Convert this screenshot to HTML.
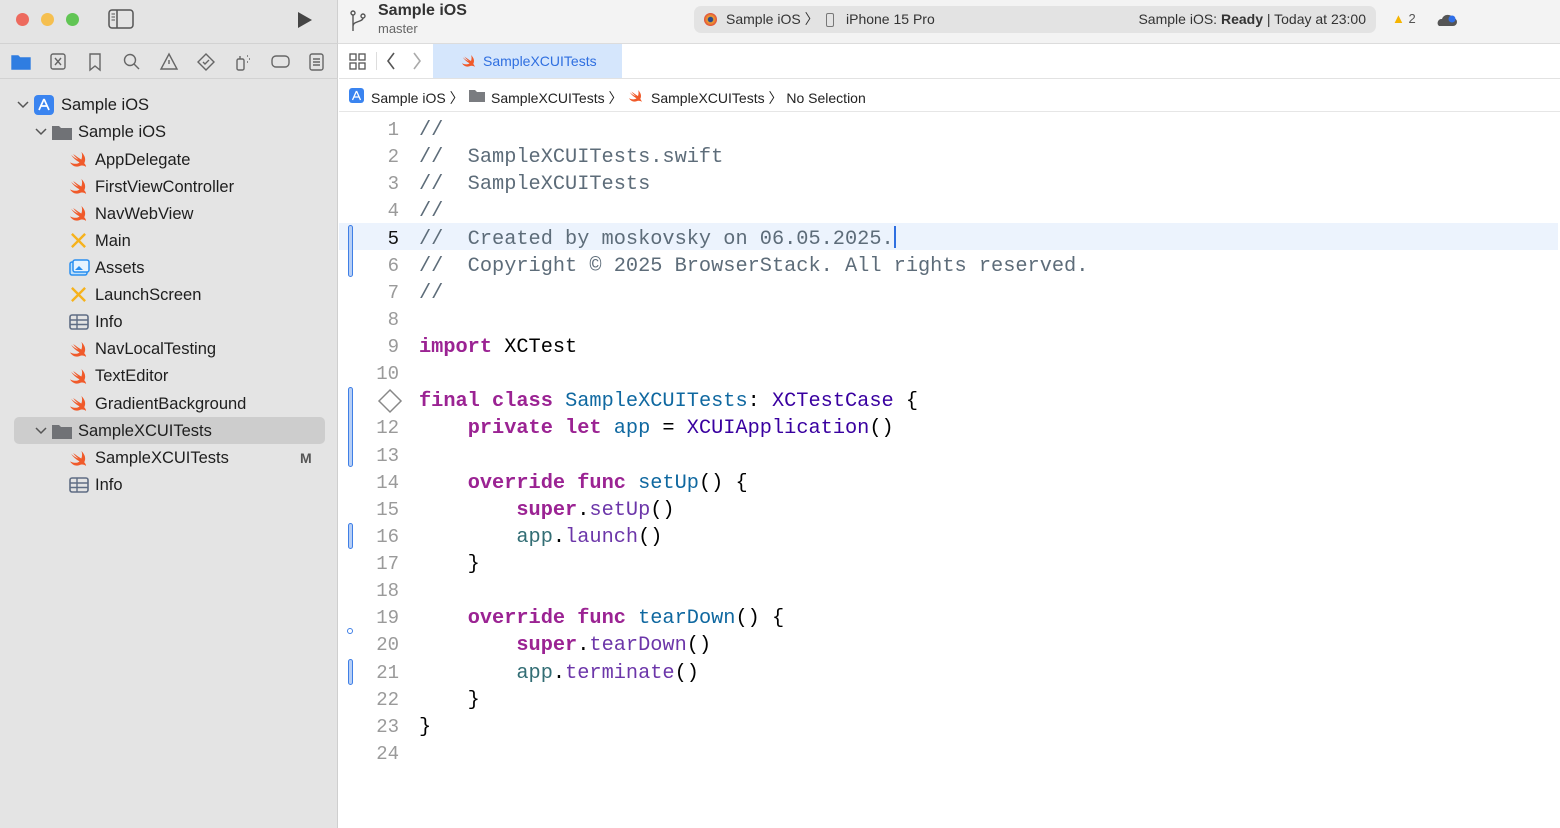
<!DOCTYPE html>
<html><head><meta charset="utf-8"><style>
*{margin:0;padding:0;box-sizing:border-box}
html,body{width:1560px;height:828px;overflow:hidden}
body{background:#fff;font-family:"Liberation Sans",sans-serif;position:relative}
.side{position:absolute;left:0;top:0;width:338px;height:828px;background:#e4e4e4;border-right:1px solid #cfcfcf}
.topbar{position:absolute;left:338px;top:0;right:0;height:44px;background:#f3f3f3;border-bottom:1px solid #dcdcdc}
.tabbar{position:absolute;left:339px;top:44px;right:0;height:35px;background:#fff;border-bottom:1px solid #e2e2e2}
.crumb{position:absolute;left:339px;top:79px;right:0;height:33px;background:#fff;border-bottom:1px solid #e6e6e6;font-size:14px;color:#222}
.dot{position:absolute;top:13px;width:13px;height:13px;border-radius:50%}
.row{position:absolute;left:0;height:27px;font-size:16.5px;color:#1e1e1e;line-height:27px;white-space:nowrap}
.code{position:absolute;left:339px;top:117px;right:0;height:700px;font-family:"Liberation Mono",monospace;font-size:20.3px;line-height:27.13px}
.ln{position:absolute;width:60px;text-align:right;color:#9a9a9a;font-size:19px;left:0}
.tx{position:absolute;left:80px;white-space:pre}
.c{color:#5d6c79}.k{color:#9b2393;font-weight:bold}.d{color:#0f68a0}.t{color:#3900a0}.u{color:#326d74}.m{color:#6c36a9}
.bar{position:absolute;left:348px;width:5px;border:1.5px solid #3f7fe6;background:#b7cff6;border-radius:3px}
.ic{position:absolute}
</style></head><body>
<div class="side">
  <div class="dot" style="left:16px;background:#ed6a5e"></div>
  <div class="dot" style="left:41px;background:#f5bf4f"></div>
  <div class="dot" style="left:66px;background:#61c554"></div>
  <svg class="ic" style="left:108px;top:9px" width="26" height="20"><rect x="1" y="1" width="24" height="18" rx="3" fill="none" stroke="#555" stroke-width="1.5"/><line x1="9" y1="1" x2="9" y2="19" stroke="#555" stroke-width="1.5"/><line x1="3.5" y1="5" x2="7" y2="5" stroke="#555"/><line x1="3.5" y1="8" x2="7" y2="8" stroke="#555"/><line x1="3.5" y1="11" x2="7" y2="11" stroke="#555"/></svg>
  <svg class="ic" style="left:296px;top:11px" width="18" height="18"><path d="M2 1 L16 9 L2 17Z" fill="#444"/></svg>
  <div style="position:absolute;left:0;top:43px;width:338px;border-top:1px solid #d2d2d2"></div>
  <div style="position:absolute;left:0;top:78px;width:338px;border-top:1px solid #d2d2d2"></div>
  <svg class="ic" style="left:11px;top:52px" width="320" height="20" fill="none" stroke="#666" stroke-width="1.4">
    <path d="M1 4 h6 l2 2 h10 v11 h-18z" fill="#2f7de1" stroke="#2f7de1"/>
    <rect x="40" y="2" width="14" height="15" rx="2"/><path d="M44 6 l6 7 M50 6 l-6 7"/>
    <path d="M79 2 h10 v16 l-5 -4 l-5 4z"/>
    <circle cx="119" cy="8" r="5.5"/><path d="M123 12 l5 5"/>
    <path d="M158 2 l8 15 h-16z"/><path d="M158 8 v4"/>
    <path d="M195 2 l8 8 l-8 8 l-8 -8z"/><path d="M192 10 l2 2 l4 -4"/>
    <rect x="226" y="7" width="7" height="11" rx="1.5"/><path d="M229 7 v-3 M236 4 l1 0 M238 7 l1 0 M236 10 l1 0"/>
    <rect x="261" y="4" width="17" height="11" rx="4"/>
    <rect x="299" y="2" width="13" height="16" rx="2"/><path d="M302 7 h7 M302 10 h7 M302 13 h7"/>
  </svg>
  <svg class="ic" style="left:17px;top:100px" width="12" height="10"><path d="M1 2 l5 5 l5 -5" stroke="#555" fill="none" stroke-width="1.5"/></svg>
  <svg class="ic" style="left:34px;top:95px" width="20" height="20"><rect x="0" y="0" width="20" height="20" rx="4" fill="#3a84f0"/><path d="M10 4 l-5 11 M10 4 l5 11 M6.5 11 h7" stroke="#fff" stroke-width="1.7" fill="none"/></svg>
  <div class="row" style="top:92px;left:61px">Sample iOS</div>
  <svg class="ic" style="left:35px;top:127px" width="12" height="10"><path d="M1 2 l5 5 l5 -5" stroke="#555" fill="none" stroke-width="1.5"/></svg>
  <svg class="ic" style="left:52px;top:124px" width="20" height="16"><path d="M0 2 h7 l2 2 h11 v12 h-20z" fill="#707276"/></svg>
  <div class="row" style="top:119px;left:78px">Sample iOS</div>
  <div style="position:absolute;left:14px;top:417px;width:311px;height:27px;background:#cdcdcd;border-radius:5px"></div>
  <svg class="ic" style="left:35px;top:426px" width="12" height="10"><path d="M1 2 l5 5 l5 -5" stroke="#555" fill="none" stroke-width="1.5"/></svg>
  <svg class="ic" style="left:52px;top:423px" width="20" height="16"><path d="M0 2 h7 l2 2 h11 v12 h-20z" fill="#707276"/></svg>
  <div class="row" style="top:418px;left:78px">SampleXCUITests</div>
  <div class="row" style="top:445px;left:300px;font-weight:bold;color:#555;font-size:14px">M</div>
  <svg width="0" height="0" style="position:absolute"><defs>
   <symbol id="sw" viewBox="0 0 20 18"><path d="M12 1 C16 5 17 9 15 13 C17 15 17 17 17 17 C15 15 12 15 10 16 C5 18 1 14 0 12 C4 14 8 14 10 12 C6 10 3 7 1 4 C4 7 8 9 9 9 C6 7 4 4 3 3 C6 5 10 8 12 9 C13 6 13 3 12 1Z" fill="#f05a2a"/></symbol>
   <symbol id="xb" viewBox="0 0 18 18"><path d="M2 2 L16 16 M16 2 L2 16" stroke="#f6b21c" stroke-width="2.5"/></symbol>
   <symbol id="tb" viewBox="0 0 20 16"><rect x="1" y="1" width="18" height="14" rx="2" fill="none" stroke="#5f6d84" stroke-width="1.6"/><path d="M1 6 h18 M1 10.5 h18 M8 1 v14" stroke="#5f6d84" stroke-width="1.4"/></symbol>
  </defs></svg>
  <svg class="ic" style="left:70px;top:151px" width="19" height="17"><use href="#sw"/></svg><div class="row" style="top:147px;left:95px">AppDelegate</div>
  <svg class="ic" style="left:70px;top:178px" width="19" height="17"><use href="#sw"/></svg><div class="row" style="top:174px;left:95px">FirstViewController</div>
  <svg class="ic" style="left:70px;top:205px" width="19" height="17"><use href="#sw"/></svg><div class="row" style="top:201px;left:95px">NavWebView</div>
  <svg class="ic" style="left:70px;top:232px" width="17" height="17"><use href="#xb"/></svg><div class="row" style="top:228px;left:95px">Main</div>
  <svg class="ic" style="left:69px;top:259px" width="21" height="17"><rect x="1" y="3" width="17" height="13" rx="2" fill="#bfe0fb" stroke="#2a8ff0" stroke-width="1.5"/><rect x="4" y="1" width="16" height="12" rx="2" fill="#e6f3ff" stroke="#2a8ff0" stroke-width="1.5"/><path d="M6 11 l4 -4 l4 4z" fill="#2a8ff0"/></svg><div class="row" style="top:255px;left:95px">Assets</div>
  <svg class="ic" style="left:70px;top:286px" width="17" height="17"><use href="#xb"/></svg><div class="row" style="top:282px;left:95px">LaunchScreen</div>
  <svg class="ic" style="left:69px;top:314px" width="20" height="16"><use href="#tb"/></svg><div class="row" style="top:309px;left:95px">Info</div>
  <svg class="ic" style="left:70px;top:341px" width="19" height="17"><use href="#sw"/></svg><div class="row" style="top:336px;left:95px">NavLocalTesting</div>
  <svg class="ic" style="left:70px;top:368px" width="19" height="17"><use href="#sw"/></svg><div class="row" style="top:363px;left:95px">TextEditor</div>
  <svg class="ic" style="left:70px;top:395px" width="19" height="17"><use href="#sw"/></svg><div class="row" style="top:391px;left:95px">GradientBackground</div>
  <svg class="ic" style="left:70px;top:450px" width="19" height="17"><use href="#sw"/></svg><div class="row" style="top:445px;left:95px">SampleXCUITests</div>
  <svg class="ic" style="left:69px;top:477px" width="20" height="16"><use href="#tb"/></svg><div class="row" style="top:472px;left:95px">Info</div>
</div>

<div class="topbar">
  <svg class="ic" style="left:12px;top:10px" width="16" height="22"><circle cx="3" cy="3" r="2" fill="none" stroke="#555" stroke-width="1.4"/><circle cx="13" cy="6" r="2" fill="none" stroke="#555" stroke-width="1.4"/><path d="M3 5 v16 M3 16 C3 11 13 12 13 8" stroke="#555" fill="none" stroke-width="1.4"/></svg>
  <div style="position:absolute;left:40px;top:2px;font-size:16px;font-weight:bold;color:#333">Sample iOS</div>
  <div style="position:absolute;left:40px;top:21px;font-size:13px;color:#666">master</div>
  <div style="position:absolute;left:356px;top:6px;width:682px;height:27px;background:#e3e3e3;border-radius:7px;font-size:14px;color:#333;line-height:27px">
    <span style="position:absolute;left:10px;top:7px;width:13px;height:13px;border-radius:50%;background:radial-gradient(circle,#2a4a8a 25%,#f0a030 35%,#e04d3a 70%)"></span>
    <span style="position:absolute;left:32px">Sample iOS 〉</span>
    <span style="position:absolute;left:132px;top:7px;width:8px;height:14px;border:1.3px solid #777;border-radius:2px"></span>
    <span style="position:absolute;left:152px">iPhone 15 Pro</span>
    <span style="position:absolute;right:10px">Sample iOS: <b>Ready</b> | Today at 23:00</span>
  </div>
  <div style="position:absolute;left:1054px;top:11px;font-size:13px;color:#555"><span style="color:#f5b400">▲</span> 2</div>
  <svg class="ic" style="left:1098px;top:12px" width="22" height="16"><path d="M3 14 h14 a4 4 0 0 0 0 -8 a6 6 0 0 0 -11 1 a4 4 0 0 0 -3 7z" fill="#555"/><circle cx="16" cy="7" r="3.5" fill="#2f6fe8"/></svg>
</div>
<div class="tabbar">
  <svg class="ic" style="left:10px;top:9px" width="18" height="18" fill="none" stroke="#555" stroke-width="1.3"><rect x="1" y="1" width="6" height="6"/><rect x="10" y="1" width="6" height="6"/><rect x="1" y="10" width="6" height="6"/><rect x="10" y="10" width="6" height="6"/></svg>
  <div style="position:absolute;left:37px;top:8px;height:18px;border-left:1px solid #ddd"></div>
  <svg class="ic" style="left:47px;top:8px" width="40" height="18" fill="none" stroke-width="1.6"><path d="M8 1 l-6 8 l6 8" stroke="#555"/><path d="M28 1 l6 8 l-6 8" stroke="#aaa"/></svg>
  <div style="position:absolute;left:94px;top:0;width:189px;height:34px;background:#d5e6fc"></div>
  <svg class="ic" style="left:123px;top:10px" width="15" height="14"><use href="#sw"/></svg>
  <div style="position:absolute;left:144px;top:9px;font-size:14px;color:#2f6fe0">SampleXCUITests</div>
</div>
<div class="crumb">
  <svg class="ic" style="left:10px;top:9px" width="15" height="15"><rect width="15" height="15" rx="3" fill="#3a84f0"/><path d="M7.5 3 l-4 9 M7.5 3 l4 9 M5 9 h5" stroke="#fff" stroke-width="1.3" fill="none"/></svg>
  <span style="position:absolute;left:32px;top:9px">Sample iOS 〉</span>
  <svg class="ic" style="left:130px;top:10px" width="16" height="13"><path d="M0 1 h6 l2 2 h8 v10 h-16z" fill="#7a7c80"/></svg>
  <span style="position:absolute;left:152px;top:9px">SampleXCUITests 〉</span>
  <svg class="ic" style="left:290px;top:10px" width="15" height="14"><use href="#sw"/></svg>
  <span style="position:absolute;left:312px;top:9px">SampleXCUITests 〉 No Selection</span>
</div>

<div style="position:absolute;left:339px;top:223px;right:2px;height:27px;background:#ecf3fd"></div>
<div class="bar" style="top:225px;height:52px"></div>
<div class="bar" style="top:387px;height:80px"></div>
<div class="bar" style="top:523px;height:26px"></div>
<div class="bar" style="top:659px;height:26px"></div>
<div style="position:absolute;left:347px;top:628px;width:6px;height:6px;border:1.5px solid #3f7fe6;border-radius:50%"></div>
<svg class="ic" style="left:377px;top:388px" width="26" height="26"><path d="M13 2 l11 11 l-11 11 l-11 -11z" fill="#fff" stroke="#888" stroke-width="1.5"/></svg>

<div class="code"><div class="ln" style="top:0">1</div><div class="tx c" style="top:0">//</div>
<div class="ln" style="top:27.13px">2</div><div class="tx c" style="top:27.13px">//  SampleXCUITests.swift</div>
<div class="ln" style="top:54.26px">3</div><div class="tx c" style="top:54.26px">//  SampleXCUITests</div>
<div class="ln" style="top:81.39px">4</div><div class="tx c" style="top:81.39px">//</div>
<div class="ln" style="top:108.52px;color:#111">5</div><div class="tx c" style="top:108.52px">//  Created by moskovsky on 06.05.2025.<span style="display:inline-block;width:2px;height:22px;background:#2f6fe0;vertical-align:-4px"></span></div>
<div class="ln" style="top:135.65px">6</div><div class="tx c" style="top:135.65px">//  Copyright © 2025 BrowserStack. All rights reserved.</div>
<div class="ln" style="top:162.78px">7</div><div class="tx c" style="top:162.78px">//</div>
<div class="ln" style="top:189.91px">8</div>
<div class="ln" style="top:217.04px">9</div><div class="tx" style="top:217.04px"><span class="k">import</span> XCTest</div>
<div class="ln" style="top:244.17px">10</div>
<div class="tx" style="top:271.3px"><span class="k">final</span> <span class="k">class</span> <span class="d">SampleXCUITests</span>: <span class="t">XCTestCase</span> {</div>
<div class="ln" style="top:298.43px">12</div><div class="tx" style="top:298.43px">    <span class="k">private</span> <span class="k">let</span> <span class="d">app</span> = <span class="t">XCUIApplication</span>()</div>
<div class="ln" style="top:325.56px">13</div>
<div class="ln" style="top:352.69px">14</div><div class="tx" style="top:352.69px">    <span class="k">override</span> <span class="k">func</span> <span class="d">setUp</span>() {</div>
<div class="ln" style="top:379.82px">15</div><div class="tx" style="top:379.82px">        <span class="k">super</span>.<span class="m">setUp</span>()</div>
<div class="ln" style="top:406.95px">16</div><div class="tx" style="top:406.95px">        <span class="u">app</span>.<span class="m">launch</span>()</div>
<div class="ln" style="top:434.08px">17</div><div class="tx" style="top:434.08px">    }</div>
<div class="ln" style="top:461.21px">18</div>
<div class="ln" style="top:488.34px">19</div><div class="tx" style="top:488.34px">    <span class="k">override</span> <span class="k">func</span> <span class="d">tearDown</span>() {</div>
<div class="ln" style="top:515.47px">20</div><div class="tx" style="top:515.47px">        <span class="k">super</span>.<span class="m">tearDown</span>()</div>
<div class="ln" style="top:542.6px">21</div><div class="tx" style="top:542.6px">        <span class="u">app</span>.<span class="m">terminate</span>()</div>
<div class="ln" style="top:569.73px">22</div><div class="tx" style="top:569.73px">    }</div>
<div class="ln" style="top:596.86px">23</div><div class="tx" style="top:596.86px">}</div>
<div class="ln" style="top:623.99px">24</div></div>
</body></html>
